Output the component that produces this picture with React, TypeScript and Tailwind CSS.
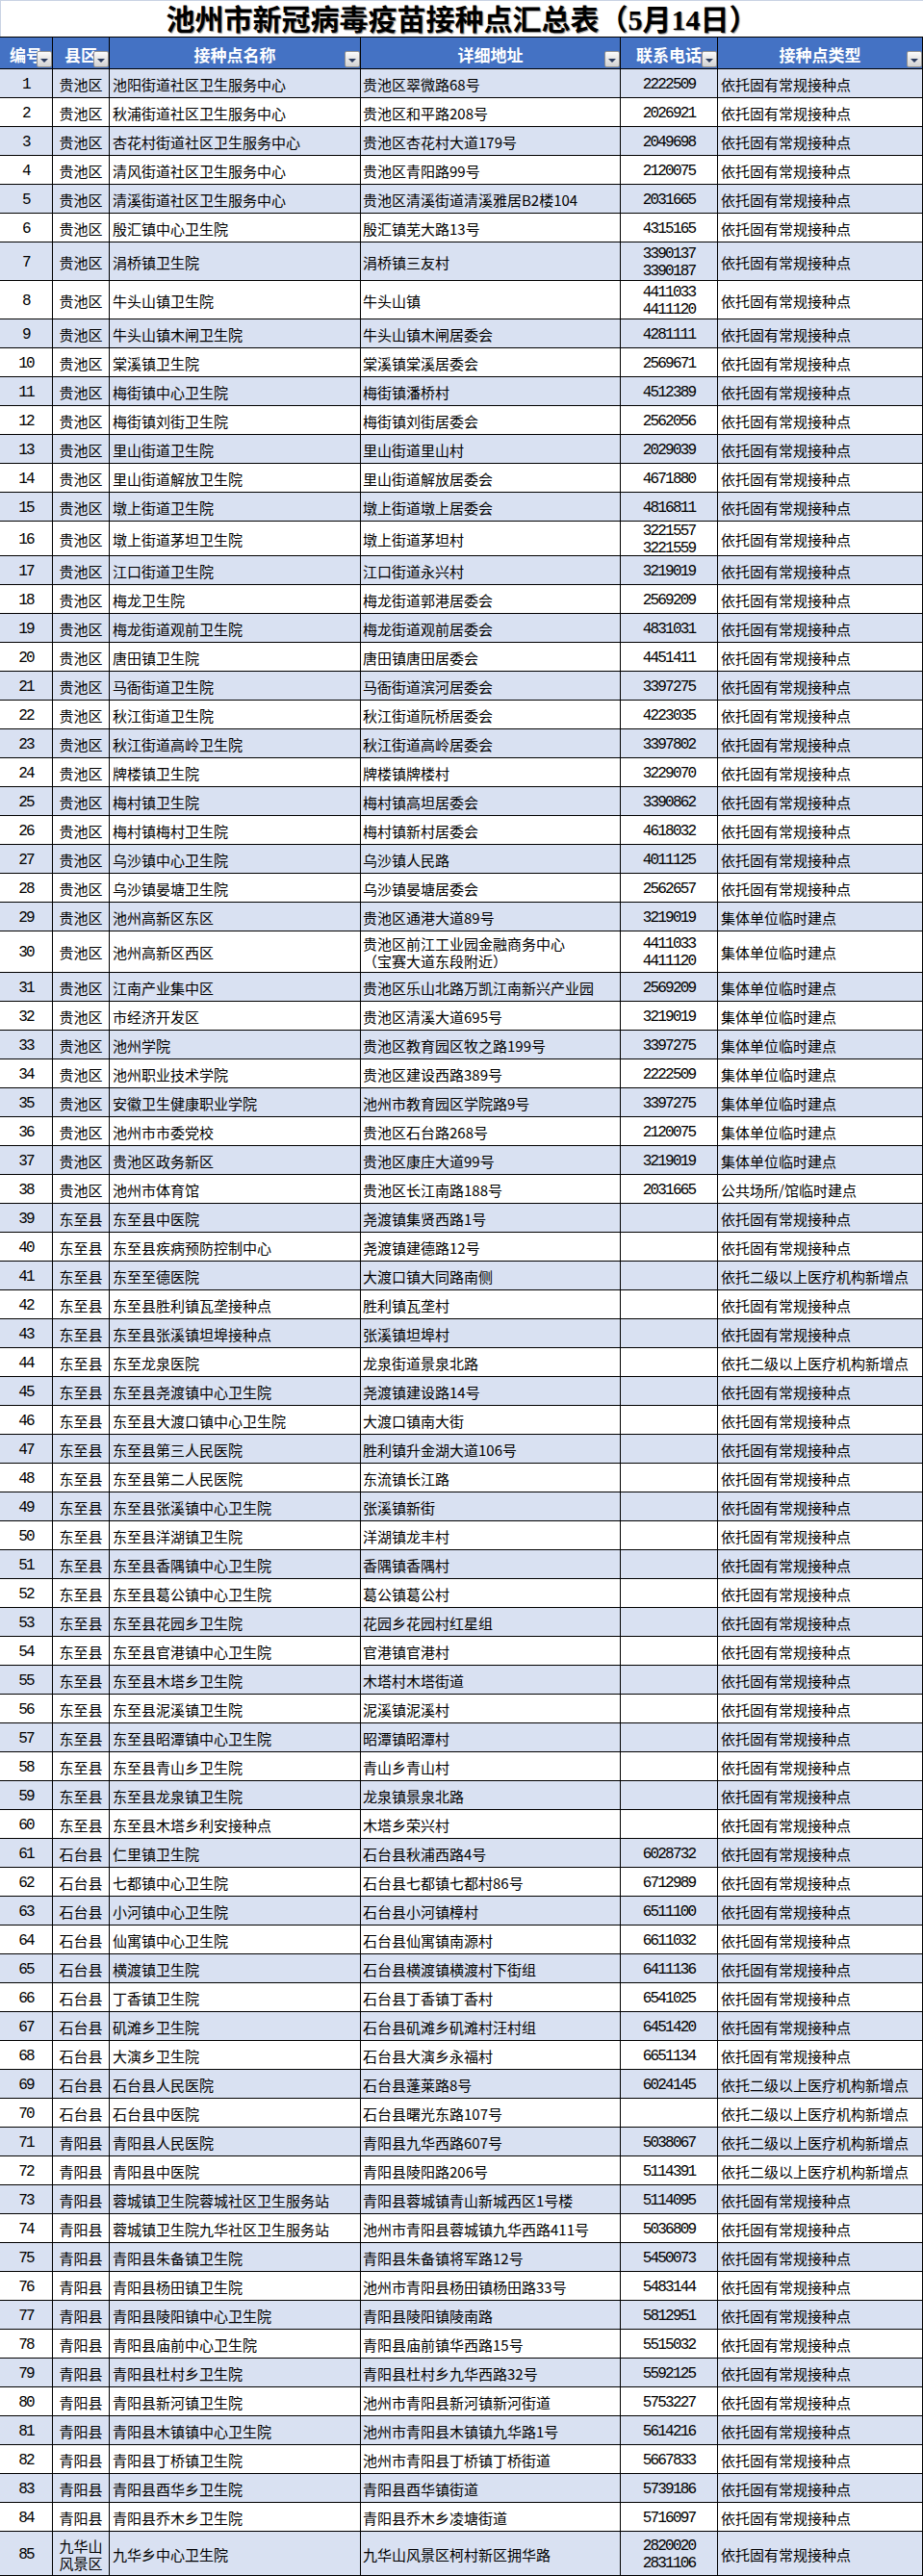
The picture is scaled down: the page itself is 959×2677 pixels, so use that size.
import React from "react";

const A = "依托固有常规接种点";
const B = "集体单位临时建点";
const C = "依托二级以上医疗机构新增点";
const D = "公共场所/馆临时建点";

type Row = [string, string, string, string, string, string];

const rows: Row[] = [
  ["1", "贵池区", "池阳街道社区卫生服务中心", "贵池区翠微路68号", "2222509", A],
  ["2", "贵池区", "秋浦街道社区卫生服务中心", "贵池区和平路208号", "2026921", A],
  ["3", "贵池区", "杏花村街道社区卫生服务中心", "贵池区杏花村大道179号", "2049698", A],
  ["4", "贵池区", "清风街道社区卫生服务中心", "贵池区青阳路99号", "2120075", A],
  ["5", "贵池区", "清溪街道社区卫生服务中心", "贵池区清溪街道清溪雅居B2楼104", "2031665", A],
  ["6", "贵池区", "殷汇镇中心卫生院", "殷汇镇芜大路13号", "4315165", A],
  ["7", "贵池区", "涓桥镇卫生院", "涓桥镇三友村", "3390137\n3390187", A],
  ["8", "贵池区", "牛头山镇卫生院", "牛头山镇", "4411033\n4411120", A],
  ["9", "贵池区", "牛头山镇木闸卫生院", "牛头山镇木闸居委会", "4281111", A],
  ["10", "贵池区", "棠溪镇卫生院", "棠溪镇棠溪居委会", "2569671", A],
  ["11", "贵池区", "梅街镇中心卫生院", "梅街镇潘桥村", "4512389", A],
  ["12", "贵池区", "梅街镇刘街卫生院", "梅街镇刘街居委会", "2562056", A],
  ["13", "贵池区", "里山街道卫生院", "里山街道里山村", "2029039", A],
  ["14", "贵池区", "里山街道解放卫生院", "里山街道解放居委会", "4671880", A],
  ["15", "贵池区", "墩上街道卫生院", "墩上街道墩上居委会", "4816811", A],
  ["16", "贵池区", "墩上街道茅坦卫生院", "墩上街道茅坦村", "3221557\n3221559", A],
  ["17", "贵池区", "江口街道卫生院", "江口街道永兴村", "3219019", A],
  ["18", "贵池区", "梅龙卫生院", "梅龙街道郭港居委会", "2569209", A],
  ["19", "贵池区", "梅龙街道观前卫生院", "梅龙街道观前居委会", "4831031", A],
  ["20", "贵池区", "唐田镇卫生院", "唐田镇唐田居委会", "4451411", A],
  ["21", "贵池区", "马衙街道卫生院", "马衙街道滨河居委会", "3397275", A],
  ["22", "贵池区", "秋江街道卫生院", "秋江街道阮桥居委会", "4223035", A],
  ["23", "贵池区", "秋江街道高岭卫生院", "秋江街道高岭居委会", "3397802", A],
  ["24", "贵池区", "牌楼镇卫生院", "牌楼镇牌楼村", "3229070", A],
  ["25", "贵池区", "梅村镇卫生院", "梅村镇高坦居委会", "3390862", A],
  ["26", "贵池区", "梅村镇梅村卫生院", "梅村镇新村居委会", "4618032", A],
  ["27", "贵池区", "乌沙镇中心卫生院", "乌沙镇人民路", "4011125", A],
  ["28", "贵池区", "乌沙镇晏塘卫生院", "乌沙镇晏塘居委会", "2562657", A],
  ["29", "贵池区", "池州高新区东区", "贵池区通港大道89号", "3219019", B],
  ["30", "贵池区", "池州高新区西区", "贵池区前江工业园金融商务中心\n（宝赛大道东段附近）", "4411033\n4411120", B],
  ["31", "贵池区", "江南产业集中区", "贵池区乐山北路万凯江南新兴产业园", "2569209", B],
  ["32", "贵池区", "市经济开发区", "贵池区清溪大道695号", "3219019", B],
  ["33", "贵池区", "池州学院", "贵池区教育园区牧之路199号", "3397275", B],
  ["34", "贵池区", "池州职业技术学院", "贵池区建设西路389号", "2222509", B],
  ["35", "贵池区", "安徽卫生健康职业学院", "池州市教育园区学院路9号", "3397275", B],
  ["36", "贵池区", "池州市市委党校", "贵池区石台路268号", "2120075", B],
  ["37", "贵池区", "贵池区政务新区", "贵池区康庄大道99号", "3219019", B],
  ["38", "贵池区", "池州市体育馆", "贵池区长江南路188号", "2031665", D],
  ["39", "东至县", "东至县中医院", "尧渡镇集贤西路1号", "", A],
  ["40", "东至县", "东至县疾病预防控制中心", "尧渡镇建德路12号", "", A],
  ["41", "东至县", "东至至德医院", "大渡口镇大同路南侧", "", C],
  ["42", "东至县", "东至县胜利镇瓦垄接种点", "胜利镇瓦垄村", "", A],
  ["43", "东至县", "东至县张溪镇坦埠接种点", "张溪镇坦埠村", "", A],
  ["44", "东至县", "东至龙泉医院", "龙泉街道景泉北路", "", C],
  ["45", "东至县", "东至县尧渡镇中心卫生院", "尧渡镇建设路14号", "", A],
  ["46", "东至县", "东至县大渡口镇中心卫生院", "大渡口镇南大街", "", A],
  ["47", "东至县", "东至县第三人民医院", "胜利镇升金湖大道106号", "", A],
  ["48", "东至县", "东至县第二人民医院", "东流镇长江路", "", A],
  ["49", "东至县", "东至县张溪镇中心卫生院", "张溪镇新街", "", A],
  ["50", "东至县", "东至县洋湖镇卫生院", "洋湖镇龙丰村", "", A],
  ["51", "东至县", "东至县香隅镇中心卫生院", "香隅镇香隅村", "", A],
  ["52", "东至县", "东至县葛公镇中心卫生院", "葛公镇葛公村", "", A],
  ["53", "东至县", "东至县花园乡卫生院", "花园乡花园村红星组", "", A],
  ["54", "东至县", "东至县官港镇中心卫生院", "官港镇官港村", "", A],
  ["55", "东至县", "东至县木塔乡卫生院", "木塔村木塔街道", "", A],
  ["56", "东至县", "东至县泥溪镇卫生院", "泥溪镇泥溪村", "", A],
  ["57", "东至县", "东至县昭潭镇中心卫生院", "昭潭镇昭潭村", "", A],
  ["58", "东至县", "东至县青山乡卫生院", "青山乡青山村", "", A],
  ["59", "东至县", "东至县龙泉镇卫生院", "龙泉镇景泉北路", "", A],
  ["60", "东至县", "东至县木塔乡利安接种点", "木塔乡荣兴村", "", A],
  ["61", "石台县", "仁里镇卫生院", "石台县秋浦西路4号", "6028732", A],
  ["62", "石台县", "七都镇中心卫生院", "石台县七都镇七都村86号", "6712989", A],
  ["63", "石台县", "小河镇中心卫生院", "石台县小河镇樟村", "6511100", A],
  ["64", "石台县", "仙寓镇中心卫生院", "石台县仙寓镇南源村", "6611032", A],
  ["65", "石台县", "横渡镇卫生院", "石台县横渡镇横渡村下街组", "6411136", A],
  ["66", "石台县", "丁香镇卫生院", "石台县丁香镇丁香村", "6541025", A],
  ["67", "石台县", "矶滩乡卫生院", "石台县矶滩乡矶滩村汪村组", "6451420", A],
  ["68", "石台县", "大演乡卫生院", "石台县大演乡永福村", "6651134", A],
  ["69", "石台县", "石台县人民医院", "石台县蓬莱路8号", "6024145", C],
  ["70", "石台县", "石台县中医院", "石台县曙光东路107号", "", C],
  ["71", "青阳县", "青阳县人民医院", "青阳县九华西路607号", "5038067", C],
  ["72", "青阳县", "青阳县中医院", "青阳县陵阳路206号", "5114391", C],
  ["73", "青阳县", "蓉城镇卫生院蓉城社区卫生服务站", "青阳县蓉城镇青山新城西区1号楼", "5114095", A],
  ["74", "青阳县", "蓉城镇卫生院九华社区卫生服务站", "池州市青阳县蓉城镇九华西路411号", "5036809", A],
  ["75", "青阳县", "青阳县朱备镇卫生院", "青阳县朱备镇将军路12号", "5450073", A],
  ["76", "青阳县", "青阳县杨田镇卫生院", "池州市青阳县杨田镇杨田路33号", "5483144", A],
  ["77", "青阳县", "青阳县陵阳镇中心卫生院", "青阳县陵阳镇陵南路", "5812951", A],
  ["78", "青阳县", "青阳县庙前中心卫生院", "青阳县庙前镇华西路15号", "5515032", A],
  ["79", "青阳县", "青阳县杜村乡卫生院", "青阳县杜村乡九华西路32号", "5592125", A],
  ["80", "青阳县", "青阳县新河镇卫生院", "池州市青阳县新河镇新河街道", "5753227", A],
  ["81", "青阳县", "青阳县木镇镇中心卫生院", "池州市青阳县木镇镇九华路1号", "5614216", A],
  ["82", "青阳县", "青阳县丁桥镇卫生院", "池州市青阳县丁桥镇丁桥街道", "5667833", A],
  ["83", "青阳县", "青阳县酉华乡卫生院", "青阳县酉华镇街道", "5739186", A],
  ["84", "青阳县", "青阳县乔木乡卫生院", "青阳县乔木乡凌塘街道", "5716097", A],
  ["85", "九华山\n风景区", "九华乡中心卫生院", "九华山风景区柯村新区拥华路", "2820020\n2831106", A],
];

const heights: Record<string, string> = {
  "7": "h-[40px]",
  "8": "h-[40px]",
  "16": "h-[36px]",
  "30": "h-[43px]",
  "85": "h-[46px]",
};

const W = ["w-[55px]", "w-[59px]", "w-[261px]", "w-[270px]", "w-[101px]", "w-[213px]"];

function FilterButton() {
  return (
    <span className="absolute right-0 bottom-[1px] flex h-[17px] w-[16px] items-center justify-center rounded-[2px] border border-[#8f8f8f] bg-linear-to-b from-[#fbfbfb] to-[#d3d3d3]">
      <span className="mt-[3px] h-0 w-0 border-l-[4px] border-r-[4px] border-t-[4px] border-l-transparent border-r-transparent border-t-[#2a3b5e]" />
    </span>
  );
}

const headers = ["编号", "县区", "接种点名称", "详细地址", "联系电话", "接种点类型"];

export default function App() {
  return (
    <div className="w-[959px] bg-white font-['Noto_Sans_CJK_SC',sans-serif] text-black">
      <div className="flex h-[38px] items-center justify-center border-l border-t border-[#c9d3e3] bg-white">
        <span className="pt-[2px] font-['Liberation_Serif','Noto_Sans_CJK_SC',serif] text-[30px] font-bold leading-[36px] tracking-[0px] text-black [text-shadow:1px_1px_1px_rgba(0,0,0,0.45)]">
          池州市新冠病毒疫苗接种点汇总表（5月14日）
        </span>
      </div>
      <div className="flex h-[34px] border-b border-t border-black bg-[#4472C4]">
        {headers.map((h, i) => (
          <div
            key={h}
            className={`${W[i]} relative flex shrink-0 items-center justify-center border-r border-black pt-[3px] text-[17px] font-bold leading-[20px] text-white`}
          >
            <span className="whitespace-nowrap">{h}</span>
            <FilterButton />
          </div>
        ))}
      </div>
      {rows.map((r, idx) => {
        const h = heights[r[0]] ?? "h-[30px]";
        const bg = idx % 2 === 0 ? "bg-[#D9E1F2]" : "bg-white";
        return (
          <div key={r[0]} className={`flex ${h} ${bg} border-b border-black text-[15px] leading-[18px]`}>
            <div className="flex w-[55px] shrink-0 items-center justify-center border-r border-black pt-[2px] font-['Liberation_Mono',monospace] text-[16px] tracking-[-1.8px]">
              {r[0]}
            </div>
            <div className="flex w-[59px] shrink-0 items-center justify-center whitespace-pre border-r border-black pt-[2px] text-center">
              {r[1]}
            </div>
            <div className="flex w-[261px] shrink-0 items-center whitespace-pre border-r border-black pl-[3px] pt-[2px]">
              {r[2]}
            </div>
            <div className="flex w-[270px] shrink-0 items-center whitespace-pre border-r border-black pl-[2px] pt-[2px]">
              {r[3]}
            </div>
            <div className="flex w-[101px] shrink-0 items-center justify-center whitespace-pre border-r border-black pt-[2px] text-center font-['Liberation_Mono',monospace] text-[16px] tracking-[-1.8px]">
              {r[4]}
            </div>
            <div className="flex w-[213px] shrink-0 items-center whitespace-pre border-r border-black pl-[3px] pt-[2px]">
              {r[5]}
            </div>
          </div>
        );
      })}
    </div>
  );
}
